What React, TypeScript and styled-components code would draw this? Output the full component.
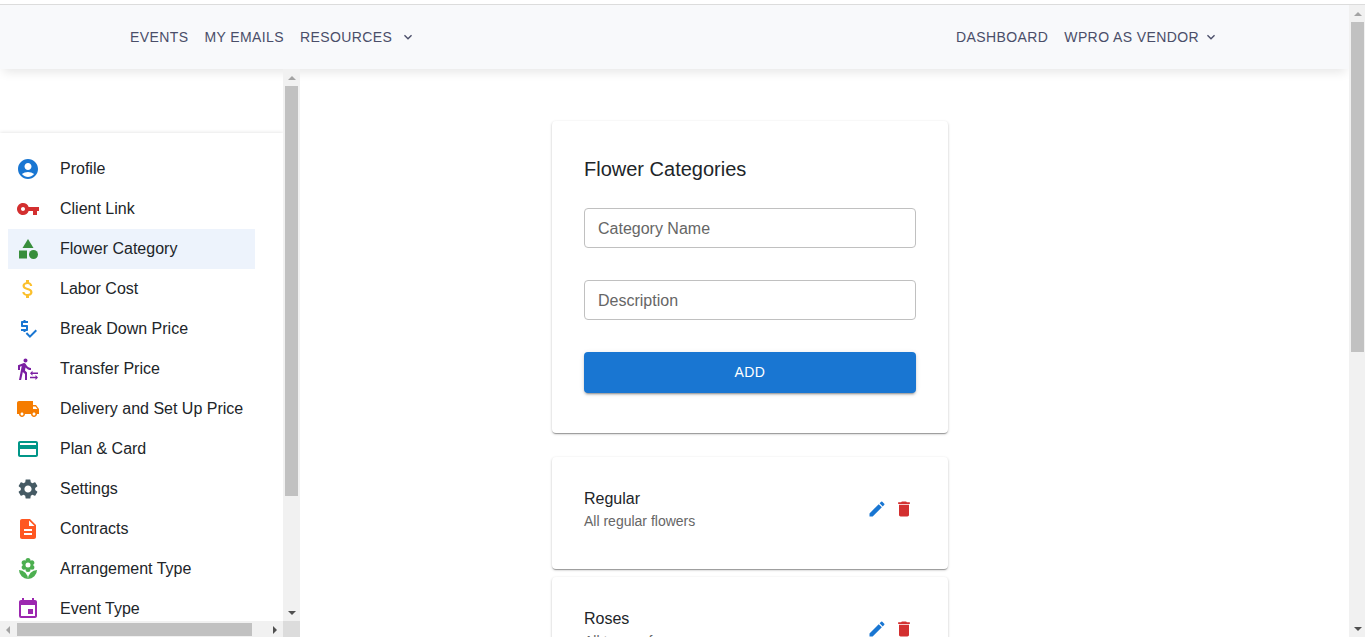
import React from "react";
import styled, { createGlobalStyle } from "styled-components";
import {
  MdAccountCircle, MdVpnKey, MdCategory, MdAttachMoney, MdPriceCheck,
  MdTransferWithinAStation, MdLocalShipping, MdCreditCard, MdSettings,
  MdDescription, MdLocalFlorist, MdEvent, MdEdit, MdDelete, MdKeyboardArrowDown,
} from "react-icons/md";

const GlobalStyle = createGlobalStyle`
  *, *::before, *::after { box-sizing: border-box; }
  body {
    margin: 0;
    background: #fff;
    color: #212529;
    font: 16px/24px "Liberation Sans", Arial, sans-serif;
    overflow: hidden;
  }
  button, input { font: inherit; color: inherit; }
`;

const Page = styled.div`
  display: flex;
  flex-direction: column;
  height: 100vh;
  padding-top: 4px;
`;

const Viewport = styled.div`
  display: flex;
  flex: 1;
  min-height: 0;
  border-top: 1px solid #dcdcdc;
`;

const Document = styled.div`
  display: flex;
  flex-direction: column;
  flex: 1;
  min-width: 0;
`;

const Header = styled.header`
  flex: none;
  height: 64px;
  background: #f8f9fb;
  box-shadow: 0 6px 10px -3px rgba(0, 0, 0, 0.1);
`;

const HeaderInner = styled.div`
  display: flex;
  align-items: center;
  justify-content: space-between;
  height: 100%;
  max-width: 1089px;
  margin: 0 auto;
`;

const NavGroup = styled.nav`
  display: flex;
  align-items: center;
  gap: 16px;
`;

const navText = `
  color: #4a4e69;
  font-size: 14px;
  line-height: 24px;
  letter-spacing: 0.4px;
  text-transform: uppercase;
  white-space: nowrap;
`;

const NavLink = styled.a`
  ${navText}
  text-decoration: none;
`;

const NavMenuButton = styled.button<{ $gap: number }>`
  ${navText}
  display: flex;
  align-items: center;
  gap: ${(p) => p.$gap}px;
  padding: 0;
  border: 0;
  background: none;
`;

const Body = styled.div`
  display: flex;
  flex: 1;
  min-height: 0;
`;

const Sidebar = styled.aside`
  display: flex;
  flex-direction: column;
  flex: none;
  width: 300px;
`;

const SidebarRow = styled.div`
  display: flex;
  flex: 1;
  min-height: 0;
`;

const SidebarContent = styled.div`
  flex: 1;
  min-width: 0;
  overflow: hidden;
  padding-top: 64px;
`;

const SideNav = styled.nav`
  padding: 16px 8px;
  box-shadow: 0 0 4px rgba(0, 0, 0, 0.14);
`;

const SideList = styled.ul`
  width: max-content;
  margin: 0;
  padding: 0;
  list-style: none;
`;

const SideLink = styled.a<{ $active?: boolean }>`
  display: flex;
  align-items: center;
  gap: 20px;
  height: 40px;
  padding: 0 12px 0 8px;
  background: ${(p) => (p.$active ? "#edf3fc" : "transparent")};
  color: inherit;
  text-decoration: none;
  white-space: nowrap;
`;

const IconSlot = styled.span<{ $color: string }>`
  display: flex;
  color: ${(p) => p.$color};
`;

const Main = styled.main`
  flex: 1;
  min-width: 0;
  overflow: hidden;
  padding-top: 52px;
`;

const MainInner = styled.div`
  max-width: 900px;
`;

const Column = styled.div`
  max-width: 444px;
  margin: 0 auto;
  padding: 0 24px;
`;

const Card = styled.section`
  border-radius: 4px;
  background: #fff;
  box-shadow: 0 2px 1px -1px rgba(0, 0, 0, 0.2), 0 1px 1px rgba(0, 0, 0, 0.14),
    0 1px 3px rgba(0, 0, 0, 0.2);
`;

const FormCard = styled(Card)`
  padding: 32px 32px 40px;
`;

const Title = styled.h1`
  margin: 0 0 23px;
  font-size: 20px;
  font-weight: 400;
  line-height: 32px;
`;

const Form = styled.form`
  display: flex;
  flex-direction: column;
  gap: 32px;
`;

const TextField = styled.input`
  width: 100%;
  height: 40px;
  padding: 2px 13px 0;
  border: 1px solid #c0c0c0;
  border-radius: 4px;
  background: #fff;
  outline: 0;
  &::placeholder { color: #666; opacity: 1; }
`;

const AddButton = styled.button`
  height: 41px;
  padding: 0 0 2px;
  border: 0;
  border-radius: 4px;
  background: #1976d2;
  color: #fff;
  font-size: 14px;
  letter-spacing: 0.4px;
  box-shadow: 0 3px 1px -2px rgba(0, 0, 0, 0.2), 0 2px 2px rgba(0, 0, 0, 0.14),
    0 1px 5px rgba(0, 0, 0, 0.12);
`;

const CategoryList = styled.div`
  display: flex;
  flex-direction: column;
  gap: 8px;
  margin-top: 24px;
`;

const CategoryCard = styled(Card)`
  display: flex;
  align-items: center;
  justify-content: space-between;
  padding: 30px 32px 38px;
`;

const CategoryName = styled.h2`
  margin: 0;
  font-size: 16px;
  font-weight: 400;
  line-height: 24px;
`;

const CategoryText = styled.p`
  margin: 0;
  color: #666;
  font-size: 14px;
  line-height: 20px;
`;

const Actions = styled.div`
  display: flex;
  gap: 3px;
`;

const IconButton = styled.button<{ $color: string }>`
  display: flex;
  padding: 2px;
  border: 0;
  background: none;
  color: ${(p) => p.$color};
`;

const Track = styled.div<{ $horizontal?: boolean }>`
  display: flex;
  flex: ${(p) => (p.$horizontal ? "1" : "none")};
  flex-direction: ${(p) => (p.$horizontal ? "row" : "column")};
  ${(p) => (p.$horizontal ? "height: 16px; padding: 2px 0 1px;" : "padding: 0 2px;")}
  position: relative;
  background: #f1f1f1;
`;

const Thumb = styled.div<{ $share: number }>`
  flex: ${(p) => p.$share} 0 0;
  background: #c1c1c1;
`;

const Rest = styled.div<{ $share: number }>`
  flex: ${(p) => p.$share} 0 0;
`;

const ArrowBox = styled.div<{ $horizontal?: boolean }>`
  display: flex;
  flex: none;
  align-items: center;
  justify-content: center;
  width: ${(p) => (p.$horizontal ? "17px" : "13px")};
  height: ${(p) => (p.$horizontal ? "13px" : "17px")};
`;

const BottomBar = styled.div`
  display: flex;
  flex: none;
`;

const Corner = styled.div`
  width: 17px;
  background: #dcdcdc;
`;

const PageTrackWrap = styled.div`
  display: flex;
  width: 16px;
  overflow: hidden;
`;

type Direction = "up" | "down" | "left" | "right";
const arrowPoints: Record<Direction, string> = {
  up: "0,6 4,2 8,6",
  down: "0,2 8,2 4,6",
  left: "5,0 5,8 1,4",
  right: "2,0 6,4 2,8",
};

const Arrow = ({ dir, color }: { dir: Direction; color: string }) => (
  <ArrowBox $horizontal={dir === "left" || dir === "right"}>
    <svg width="8" height="8" viewBox="0 0 8 8" aria-hidden="true">
      <polygon points={arrowPoints[dir]} fill={color} />
    </svg>
  </ArrowBox>
);

const VerticalBar = ({ thumb, rest }: { thumb: number; rest: number }) => (
  <Track aria-hidden="true">
    <Arrow dir="up" color="#a3a3a3" />
    <Thumb $share={thumb} />
    <Rest $share={rest} />
    <Arrow dir="down" color="#505050" />
  </Track>
);

const items = [
  { label: "Profile", icon: MdAccountCircle, color: "#1976d2" },
  { label: "Client Link", icon: MdVpnKey, color: "#d32f2f" },
  { label: "Flower Category", icon: MdCategory, color: "#388e3c", active: true },
  { label: "Labor Cost", icon: MdAttachMoney, color: "#fbc02d" },
  { label: "Break Down Price", icon: MdPriceCheck, color: "#1976d2" },
  { label: "Transfer Price", icon: MdTransferWithinAStation, color: "#7b1fa2" },
  { label: "Delivery and Set Up Price", icon: MdLocalShipping, color: "#f57c00" },
  { label: "Plan & Card", icon: MdCreditCard, color: "#009688" },
  { label: "Settings", icon: MdSettings, color: "#455a64" },
  { label: "Contracts", icon: MdDescription, color: "#ff5722" },
  { label: "Arrangement Type", icon: MdLocalFlorist, color: "#4caf50" },
  { label: "Event Type", icon: MdEvent, color: "#9c27b0" },
];

const categories = [
  { name: "Regular", text: "All regular flowers" },
  { name: "Roses", text: "All types of roses" },
];

export default function App() {
  return (
    <>
      <GlobalStyle />
      <Page>
        <Viewport>
          <Document>
            <Header>
              <HeaderInner>
                <NavGroup aria-label="Main">
                  <NavLink href="#events">Events</NavLink>
                  <NavLink href="#emails">My Emails</NavLink>
                  <NavMenuButton type="button" $gap={8}>
                    Resources
                    <MdKeyboardArrowDown size={16} />
                  </NavMenuButton>
                </NavGroup>
                <NavGroup aria-label="Account">
                  <NavLink href="#dashboard">Dashboard</NavLink>
                  <NavMenuButton type="button" $gap={4}>
                    WPro as Vendor
                    <MdKeyboardArrowDown size={16} />
                  </NavMenuButton>
                </NavGroup>
              </HeaderInner>
            </Header>
            <Body>
              <Sidebar>
                <SidebarRow>
                  <SidebarContent>
                    <SideNav aria-label="Settings">
                      <SideList>
                        {items.map(({ label, icon: Icon, color, active }) => (
                          <li key={label}>
                            <SideLink href="#" $active={active}>
                              <IconSlot $color={color}>
                                <Icon size={24} />
                              </IconSlot>
                              {label}
                            </SideLink>
                          </li>
                        ))}
                      </SideList>
                    </SideNav>
                  </SidebarContent>
                  <VerticalBar thumb={410} rest={108} />
                </SidebarRow>
                <BottomBar aria-hidden="true">
                  <Track $horizontal>
                    <Arrow dir="left" color="#a3a3a3" />
                    <Thumb $share={235} />
                    <Rest $share={14} />
                    <Arrow dir="right" color="#505050" />
                  </Track>
                  <Corner />
                </BottomBar>
              </Sidebar>
              <Main>
                <MainInner>
                  <Column>
                    <FormCard>
                      <Title>Flower Categories</Title>
                      <Form onSubmit={(e) => e.preventDefault()}>
                        <TextField aria-label="Category Name" placeholder="Category Name" />
                        <TextField aria-label="Description" placeholder="Description" />
                        <AddButton type="submit">ADD</AddButton>
                      </Form>
                    </FormCard>
                    <CategoryList>
                      {categories.map((c) => (
                        <CategoryCard key={c.name}>
                          <div>
                            <CategoryName>{c.name}</CategoryName>
                            <CategoryText>{c.text}</CategoryText>
                          </div>
                          <Actions>
                            <IconButton type="button" aria-label={`Edit ${c.name}`} $color="#1976d2">
                              <MdEdit size={20} />
                            </IconButton>
                            <IconButton type="button" aria-label={`Delete ${c.name}`} $color="#d32f2f">
                              <MdDelete size={20} />
                            </IconButton>
                          </Actions>
                        </CategoryCard>
                      ))}
                    </CategoryList>
                  </Column>
                </MainInner>
              </Main>
            </Body>
          </Document>
          <PageTrackWrap>
            <VerticalBar thumb={330} rest={268} />
          </PageTrackWrap>
        </Viewport>
      </Page>
    </>
  );
}
